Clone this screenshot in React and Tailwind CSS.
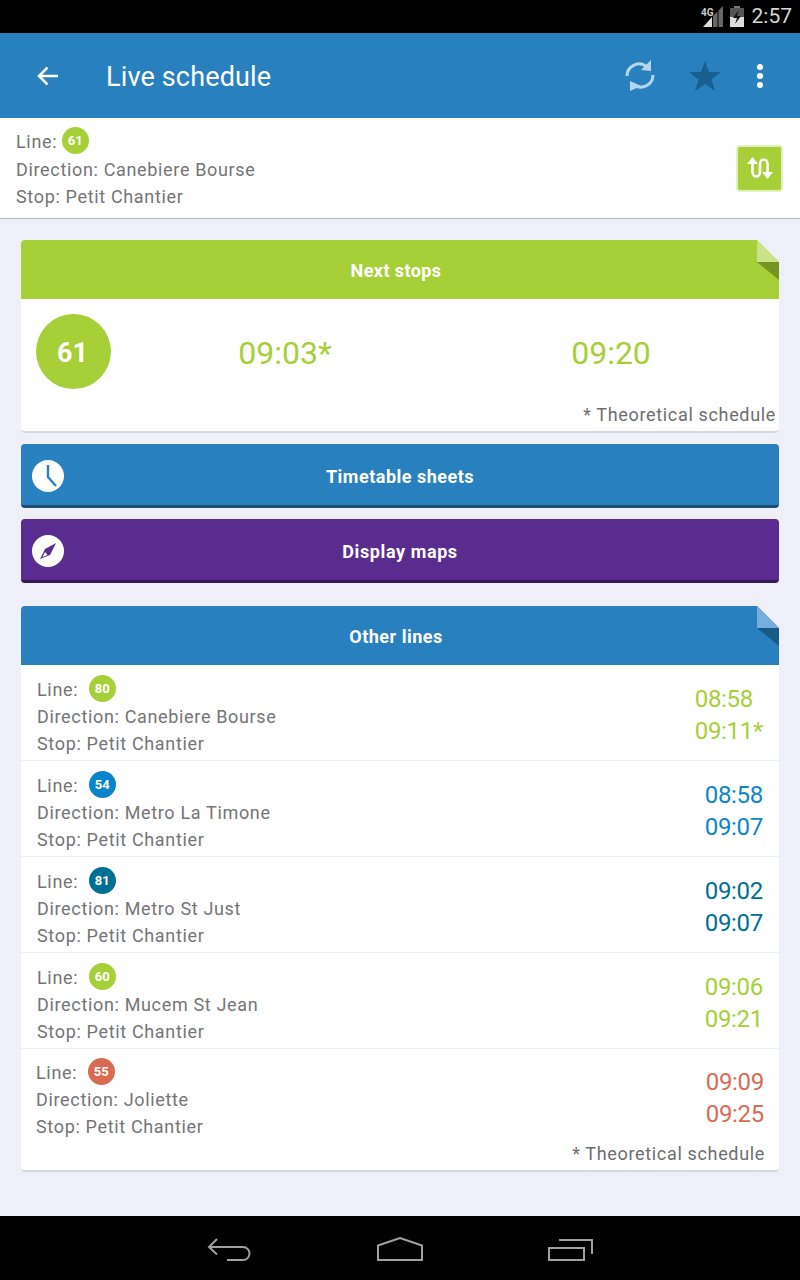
const green = "#a6cf38";

const lines = [
  { no: "80", color: "#a6cf38", dir: "Canebiere Bourse", times: ["08:58", "09:11*"] },
  { no: "54", color: "#0a85cc", dir: "Metro La Timone", times: ["08:58", "09:07"] },
  { no: "81", color: "#006f94", dir: "Metro St Just", times: ["09:02", "09:07"] },
  { no: "60", color: "#a6cf38", dir: "Mucem St Jean", times: ["09:06", "09:21"] },
];

const Badge = ({ no, color }) => (
  <span
    className="w-[27px] h-[27px] rounded-full flex items-center justify-center pr-[1px] text-white text-[13px] font-bold tracking-normal"
    style={{ backgroundColor: color }}
  >
    {no}
  </span>
);

const Fold = ({ light, dark, bg = "#eeeff8" }) => (
  <svg className="absolute top-0 right-0" width="22" height="40" viewBox="0 0 22 40">
    <polygon points="0,0 22,0 22,22" fill={bg} />
    <polygon points="0,0 22,22 0,22" fill={light} />
    <polygon points="0,22 22,22 22,40" fill={dark} />
  </svg>
);

const LineInfo = ({ no, color, dir, top = "pt-[11px]" }) => (
  <div className={`text-[18px] leading-[27px] text-[#757575] tracking-[0.66px] ${top}`}>
    <div className="flex items-center h-[27px] -mt-[1px] mb-[1px] gap-[11px]">
      <span className="pt-[2px]">Line:</span>
      <Badge no={no} color={color} />
    </div>
    <div>Direction: {dir}</div>
    <div>Stop: Petit Chantier</div>
  </div>
);

const LineRow = ({ no, color, dir, times }) => (
  <div className="h-[96px] border-b border-[#eeeff8] px-[16px] flex justify-between">
    <LineInfo no={no} color={color} dir={dir} />
    <div className="text-[24px] leading-[32px] pt-[18px] tracking-[-0.3px]" style={{ color }}>
      <div>{times[0]}</div>
      <div>{times[1]}</div>
    </div>
  </div>
);

const App = () => {
  return (
    <div className="w-[800px] h-[1280px] flex flex-col bg-[#eeeff8] overflow-hidden font-['Roboto',sans-serif]">
      {/* status bar */}
      <div className="h-[33px] bg-black flex items-center justify-end pr-[8px] gap-[7px]">
        <svg width="22" height="22" viewBox="0 0 22 22">
          <polygon points="22,0 22,21 17.500,21 17.500,4.500" fill="#666" />
          <polygon points="16.500,5.500 16.500,21 12,21 12,10" fill="#666" />
          <polygon points="11,11 11,21 2,21" fill="#ddd" />
          <text x="0" y="10" fontSize="10" fontWeight="700" fill="#ccc" fontFamily="Roboto">4G</text>
        </svg>
        <svg className="mr-[1px]" width="14" height="21" viewBox="0 0 14 21">
          <rect x="4" y="0" width="6" height="3" fill="#777" />
          <rect x="0" y="2" width="14" height="9" fill="#555" />
          <rect x="0" y="11" width="14" height="10" fill="#ddd" />
          <polygon points="9,4 3,12 7,12 5,18 11,10 7,10" fill="#111" />
        </svg>
        <span className="text-[21px] text-[#d5d5d5] leading-none">2:57</span>
      </div>

      {/* app bar */}
      <div className="h-[85px] bg-[#2980be] flex items-center text-white">
        <svg className="ml-[37px]" width="22" height="22" viewBox="0 0 22 22" fill="none" stroke="white" strokeWidth="2.5">
          <path d="M2 11 H21 M10.500 2.500 L2 11 L10.500 19.500" />
        </svg>
        <h1 className="ml-[47px] pt-[3px] text-[27px] tracking-[0.15px] font-normal flex-1">Live schedule</h1>
        <svg width="32" height="32" viewBox="0 0 32 32" fill="none" stroke="#b5d6ef" strokeWidth="3">
          <path d="M3 16 C3 6 15 0 23 7" />
          <polygon points="27,0 27,11 17,10" fill="#b5d6ef" stroke="none" />
          <path d="M29 15 C29 25 17 31 9 24" />
          <polygon points="6,31 6,21 17,26" fill="#b5d6ef" stroke="none" />
        </svg>
        <svg className="ml-[33px]" width="32" height="30" viewBox="0 0 32 30">
          <polygon points="16,0 20,11 32,11 22.500,18.500 26,30 16,23 6,30 9.500,18.500 0,11 12,11" fill="#195f90" />
        </svg>
        <div className="ml-[36px] mr-[37px] flex flex-col gap-[3px]">
          <span className="w-[6px] h-[6px] rounded-full bg-white" />
          <span className="w-[6px] h-[6px] rounded-full bg-white" />
          <span className="w-[6px] h-[6px] rounded-full bg-white" />
        </div>
      </div>

      {/* selected line */}
      <div className="h-[101px] bg-white border-b border-[#b8b8bc] px-[16px] flex items-center justify-between">
        <div className="text-[18px] leading-[27px] text-[#757575] tracking-[0.66px]">
          <div className="flex items-center gap-[5px] h-[27px]">
            <span className="pt-[2px]">Line:</span>
            <Badge no="61" color={green} />
          </div>
          <div className="pt-[2px]">Direction: Canebiere Bourse</div>
          <div>Stop: Petit Chantier</div>
        </div>
        <button className="mr-[1px] w-[47px] h-[47px] rounded-[4px] bg-[#a6cf38] border-2 border-[#e1efbd] flex items-center justify-center">
          <svg width="26" height="24" viewBox="0 0 26 24" fill="none" stroke="white" strokeWidth="2.6">
            <path d="M5.500 7 V16 C5.500 22 13 22 13 16 V8 C13 2 20.500 2 20.500 8 V17" />
            <polygon points="5.500,1 11,8 0,8" fill="white" stroke="none" />
            <polygon points="20.500,23 26,16 15,16" fill="white" stroke="none" />
          </svg>
        </button>
      </div>

      <main className="flex-1 px-[21px] pt-[21px] flex flex-col">
        {/* next stops */}
        <section className="bg-white rounded-[4px] border-b-2 border-[#d5d9e0] h-[193px]">
          <div className="relative h-[59px] rounded-t-[4px] bg-[#a6cf38] flex items-center justify-center pt-[2px] pr-[8px] text-white text-[18px] tracking-[0.4px] font-bold">
            Next stops
            <Fold light="#cbe388" dark="#76941f" />
          </div>
          <div className="flex items-start pl-[15px] pt-[15px]">
            <div className="w-[75px] h-[75px] rounded-full bg-[#a6cf38] flex items-center justify-center pt-[3px] pr-[2px] text-white text-[27px] font-bold">
              61
            </div>
            <div className="w-[348px] pt-[2px] text-center text-[32px] text-[#a6cf38] leading-[75px]">09:03*</div>
            <div className="w-[304px] pt-[2px] text-center text-[32px] text-[#a6cf38] leading-[75px]">09:20</div>
          </div>
          <p className="text-right pr-[3px] pt-[10px] text-[18px] tracking-[0.66px] leading-[27px] text-[#6e6e6e]">* Theoretical schedule</p>
        </section>

        {/* buttons */}
        <button className="relative mt-[11px] h-[64px] rounded-[4px] bg-[#2980be] border-b-[3px] border-[#1c4f72] text-white text-[18px] tracking-[0.5px] font-bold flex items-center justify-center pt-[3px]">
          <span className="absolute left-[11px] top-[16px] w-[32px] h-[32px] rounded-full bg-white flex items-center justify-center">
            <svg width="32" height="32" viewBox="0 0 32 32" fill="none" stroke="#2980be" strokeWidth="2.4">
              <path d="M16 5 V17 L24 26" />
            </svg>
          </span>
          Timetable sheets
        </button>
        <button className="relative mt-[11px] h-[64px] rounded-[4px] bg-[#5a2c90] border-b-[3px] border-[#361a57] text-white text-[18px] tracking-[0.6px] font-bold flex items-center justify-center pt-[3px]">
          <span className="absolute left-[11px] top-[16px] w-[32px] h-[32px] rounded-full bg-white flex items-center justify-center">
            <svg width="32" height="32" viewBox="0 0 32 32">
              <polygon points="24,8 18,20 8,24 13,14" fill="#5a2c90" />
              <polygon points="13,17 15.500,20 10.500,22" fill="white" />
            </svg>
          </span>
          Display maps
        </button>

        {/* other lines */}
        <section className="mt-[23px] bg-white rounded-[4px] border-b-2 border-[#d5d9e0] h-[566px]">
          <div className="relative h-[59px] rounded-t-[4px] bg-[#2980be] flex items-center justify-center pt-[2px] pr-[8px] text-white text-[18px] tracking-[0.5px] font-bold">
            Other lines
            <Fold light="#74aedb" dark="#175a86" />
          </div>
          {lines.map((l) => (
            <LineRow key={l.no} {...l} />
          ))}
          <div className="pl-[15px] pr-[15px] flex justify-between">
            <LineInfo no="55" color="#d96b53" dir="Joliette" top="pt-[10px]" />
            <div className="text-[24px] leading-[32px] pt-[17px] tracking-[-0.3px] text-[#d96b53]">
              <div>09:09</div>
              <div>09:25</div>
            </div>
          </div>
          <p className="text-right pr-[14px] text-[18px] tracking-[0.66px] leading-[27px] text-[#6e6e6e]">* Theoretical schedule</p>
        </section>
      </main>

      {/* nav bar */}
      <div className="h-[64px] bg-black flex items-center pl-[207px] pt-[2px]">
        <svg width="44" height="24" viewBox="0 0 44 24" fill="none" stroke="#a0a0a0" strokeWidth="2">
          <path d="M2 10 H36 A6.500 6.500 0 0 1 36 23 H20 M10 2 L2 10 L10 17.500" />
        </svg>
        <svg className="ml-[126px]" width="46" height="24" viewBox="0 0 46 24" fill="none" stroke="#a0a0a0" strokeWidth="2">
          <path d="M1 23 V8.500 L23 1 L45 8.500 V23 Z" />
        </svg>
        <svg className="ml-[125px]" width="45" height="24" viewBox="0 0 45 24" fill="none" stroke="#a0a0a0" strokeWidth="2">
          <path d="M11 3 H44 V17" />
          <rect x="1" y="11" width="35" height="12" />
        </svg>
      </div>
    </div>
  );
};

export default App;
